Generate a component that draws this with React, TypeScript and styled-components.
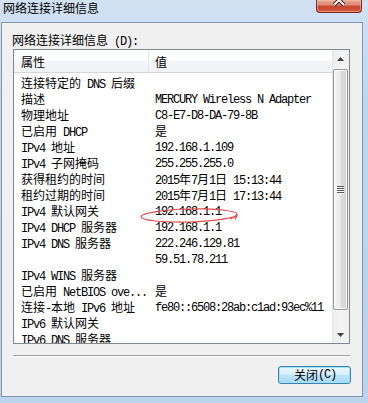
import React from "react";
import styled, { createGlobalStyle } from "styled-components";

const GlobalStyle = createGlobalStyle`
  html, body {
    margin: 0;
    padding: 0;
    background: #bcd3ec;
  }
  body {
    font-family: "Liberation Mono", "Noto Sans CJK SC", monospace;
    color: #000;
  }
`;

const CJK = /[\u2e80-\u9fff\uff00-\uffef]/;
const splitRuns = (text: string) =>
	text.match(/[\u2e80-\u9fff\uff00-\uffef]+|[^\u2e80-\u9fff\uff00-\uffef]+/g) ?? [];

const Han = styled.span`
  font-family: "Noto Sans CJK SC", sans-serif;
  font-size: 12px;
  letter-spacing: 0;
`;

const Latin = styled.span`
  font-family: "Liberation Mono", monospace;
  font-size: 12px;
  letter-spacing: -1.2px;
`;

// SimSun style: full-width han, half-width latin
const Mixed: React.FC<{ text: string }> = ({ text }) => (
	<>
		{splitRuns(text).map((run, i) =>
			CJK.test(run[0]) ? <Han key={i}>{run}</Han> : <Latin key={i}>{run}</Latin>,
		)}
	</>
);

const Frame = styled.div`
  position: relative;
  width: 368px;
  height: 403px;
  box-sizing: border-box;
  display: flex;
  flex-direction: column;
  padding: 0 5px 6px 1px;
  background: linear-gradient(180deg, #d2e2f3 0%, #c0d6ee 25%, #bcd3ec 100%);
  overflow: hidden;
`;

const TitleBar = styled.div`
  height: 22px;
  display: flex;
  justify-content: space-between;
  align-items: flex-start;
`;

const Title = styled.div`
  padding: 1px 0 0 2px;
  line-height: 14px;
  white-space: pre;
`;

const CloseBox = styled.div`
  width: 46px;
  height: 13px;
  box-sizing: border-box;
  margin-right: 1px;
  border: 1px solid #7a2a1c;
  border-top: none;
  border-radius: 0 0 4px 4px;
  background: linear-gradient(180deg, #e9a897 0%, #dd8a76 40%, #c4462e 55%, #d45a3f 100%);
  box-shadow: inset 0 0 0 1px rgba(255, 200, 180, 0.5);
  display: flex;
  justify-content: center;
`;

const Client = styled.div`
  flex: 1;
  display: flex;
  flex-direction: column;
  padding: 0 12px 0 11px;
  border: 1px solid #8196ae;
  background: #f0f0f0;
`;

const Label = styled.div`
  margin: 9px 0 0 -1px;
  height: 16px;
  line-height: 16px;
  white-space: pre;
`;

const ListBox = styled.div`
  margin-top: 1px;
  height: 295px;
  box-sizing: border-box;
  border: 1px solid #828790;
  background: #fff;
  display: flex;
`;

const ListBody = styled.div`
  flex: 1;
  min-width: 0;
  display: flex;
  flex-direction: column;
  overflow: hidden;
`;

const Header = styled.div`
  height: 23px;
  box-sizing: border-box;
  display: grid;
  grid-template-columns: 135px 1fr;
  border-bottom: 1px solid #d5d5d5;
  background: linear-gradient(180deg, #ffffff 0%, #ffffff 45%, #f4f5f7 50%, #f1f2f4 100%);
`;

const HeaderCell = styled.div<{ $first?: boolean }>`
  padding: 1px 0 0 ${(p) => (p.$first ? 7 : 6)}px;
  line-height: 21px;
  border-right: ${(p) => (p.$first ? "1px solid #e3e5e8" : "none")};
  white-space: pre;
`;

const Rows = styled.div`
  padding-top: 2px;
`;

const Row = styled.div`
  height: 16px;
  display: grid;
  grid-template-columns: 135px 1fr;
  line-height: 16px;
`;

const Cell = styled.div<{ $first?: boolean }>`
  padding-left: ${(p) => (p.$first ? 7 : 6)}px;
  white-space: pre;
  overflow: hidden;
`;

const ScrollBar = styled.div`
  width: 17px;
  display: flex;
  flex-direction: column;
  background: linear-gradient(90deg, #e4e4e4 0px, #eeeeee 2px, #f4f4f4 60%, #f0f0f0 100%);
`;

const ArrowButton = styled.div`
  height: 17px;
  display: flex;
  align-items: center;
  justify-content: center;
`;

const Thumb = styled.div`
  margin: 2px 1px 0 1px;
  height: 241px;
  box-sizing: border-box;
  border: 1px solid #979797;
  border-radius: 2px;
  background: linear-gradient(90deg, #f4f4f4 0%, #ebebeb 45%, #dcdcdc 55%, #d3d3d3 100%);
  box-shadow: inset 0 0 0 1px rgba(255, 255, 255, 0.8);
  display: flex;
  align-items: center;
  justify-content: center;
`;

const Track = styled.div`
  flex: 1;
`;

const Separator = styled.div`
  margin-top: 11px;
  border-top: 1px solid #a0a0a0;
  border-bottom: 1px solid #ffffff;
`;

const ButtonRow = styled.div`
  margin-top: 9px;
  display: flex;
  justify-content: flex-end;
`;

const DialogButton = styled.div`
  width: 73px;
  height: 18px;
  box-sizing: border-box;
  margin-right: -1px;
  border: 1px solid #3c7fb1;
  border-radius: 3px;
  background: linear-gradient(180deg, #eaf6fd 0%, #d9f0fc 45%, #bee6fd 50%, #a7d9f5 100%);
  box-shadow: inset 0 0 0 1px #9fe4fb;
  display: flex;
  align-items: center;
  justify-content: center;
  line-height: 16px;
  padding-left: 1px;
  white-space: pre;
`;

const Annotation = styled.svg`
  position: absolute;
  left: 138px;
  top: 204px;
  overflow: visible;
`;

const rows: [string, string][] = [
	["连接特定的 DNS 后缀", ""],
	["描述", "MERCURY Wireless N Adapter"],
	["物理地址", "C8-E7-D8-DA-79-8B"],
	["已启用 DHCP", "是"],
	["IPv4 地址", "192.168.1.109"],
	["IPv4 子网掩码", "255.255.255.0"],
	["获得租约的时间", "2015年7月1日 15:13:44"],
	["租约过期的时间", "2015年7月1日 17:13:44"],
	["IPv4 默认网关", "192.168.1.1"],
	["IPv4 DHCP 服务器", "192.168.1.1"],
	["IPv4 DNS 服务器", "222.246.129.81"],
	["", "59.51.78.211"],
	["IPv4 WINS 服务器", ""],
	["已启用 NetBIOS ove...", "是"],
	["连接-本地 IPv6 地址", "fe80::6508:28ab:c1ad:93ec%11"],
	["IPv6 默认网关", ""],
	["IPv6 DNS 服务器", ""],
];

const App: React.FC = () => {
	return (
		<>
			<GlobalStyle />
			<Frame>
				<TitleBar>
					<Title>
						<Mixed text="网络连接详细信息" />
					</Title>
					<CloseBox>
						<svg width="12" height="8" viewBox="0 0 12 8">
							<path d="M1 -5 L11 5 M11 -5 L1 5" stroke="#3d150c" strokeWidth="4" />
							<path d="M1 -5 L11 5 M11 -5 L1 5" stroke="#ffffff" strokeWidth="2" />
						</svg>
					</CloseBox>
				</TitleBar>
				<Client>
					<Label>
						<Mixed text="网络连接详细信息 (D):" />
					</Label>
					<ListBox>
						<ListBody>
							<Header>
								<HeaderCell $first>
									<Mixed text="属性" />
								</HeaderCell>
								<HeaderCell>
									<Mixed text="值" />
								</HeaderCell>
							</Header>
							<Rows>
								{rows.map(([name, value], i) => (
									<Row key={i}>
										<Cell $first>
											<Mixed text={name} />
										</Cell>
										<Cell>
											<Mixed text={value} />
										</Cell>
									</Row>
								))}
							</Rows>
						</ListBody>
						<ScrollBar>
							<ArrowButton>
								<svg width="7" height="4" viewBox="0 0 7 4">
									<polygon points="0,4 3.5,0 7,4" fill="#404040" />
								</svg>
							</ArrowButton>
							<Thumb>
								<svg width="7" height="8" viewBox="0 0 7 8">
									<path d="M0 0.5 H7 M0 2.5 H7 M0 4.5 H7 M0 6.5 H7" stroke="#5a5a5a" strokeWidth="1" />
									<path d="M0 1.5 H7 M0 3.5 H7 M0 5.5 H7 M0 7.5 H7" stroke="#ffffff" strokeWidth="1" />
								</svg>
							</Thumb>
							<Track />
							<ArrowButton>
								<svg width="7" height="4" viewBox="0 0 7 4">
									<polygon points="0,0 7,0 3.5,4" fill="#404040" />
								</svg>
							</ArrowButton>
						</ScrollBar>
					</ListBox>
					<Separator />
					<ButtonRow>
						<DialogButton>
							<Mixed text="关闭(C)" />
						</DialogButton>
					</ButtonRow>
				</Client>
				<Annotation width="104" height="22" viewBox="0 0 104 22">
					<ellipse
						cx="51"
						cy="11.5"
						rx="48"
						ry="6.5"
						fill="none"
						stroke="#e44b4b"
						strokeWidth="1.2"
						transform="rotate(-1.5 51 11.5)"
					/>
					<path d="M92 15 L99 12 L97 15.5" fill="none" stroke="#e44b4b" strokeWidth="1.2" />
				</Annotation>
			</Frame>
		</>
	);
};

export default App;
